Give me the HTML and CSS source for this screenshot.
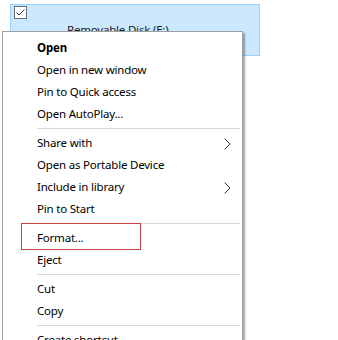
FILE: index.html
```html
<!DOCTYPE html>
<html>
<head>
<meta charset="utf-8">
<link rel="stylesheet" href="styles.css">
</head>
<body>
<div class="page">
  <div class="tile">
    <span class="check">
      <svg width="13" height="13" viewBox="0 0 13 13"><rect x="0.5" y="0.5" width="12" height="12" fill="#fff" stroke="#6d6d6d"/><path d="M2.5 6.5 L5 9 L10.5 3.5" fill="none" stroke="#333" stroke-width="1"/></svg>
    </span>
    <span class="label">Removable Disk (E:)</span>
  </div>

  <div class="menu">
    <div class="item bold">Open</div>
    <div class="item">Open in new window</div>
    <div class="item">Pin to Quick access</div>
    <div class="item">Open AutoPlay...</div>
    <div class="sep"></div>
    <div class="item">Share with<svg class="chev" width="7" height="12" viewBox="0 0 7 12"><path d="M0.5 0.5 L6 6 L0.5 11.5" fill="none" stroke="#333" stroke-width="1"/></svg></div>
    <div class="item">Open as Portable Device</div>
    <div class="item">Include in library<svg class="chev" width="7" height="12" viewBox="0 0 7 12"><path d="M0.5 0.5 L6 6 L0.5 11.5" fill="none" stroke="#333" stroke-width="1"/></svg></div>
    <div class="item">Pin to Start</div>
    <div class="sep"></div>
    <div class="item">Format...</div>
    <div class="item">Eject</div>
    <div class="sep"></div>
    <div class="item">Cut</div>
    <div class="item">Copy</div>
    <div class="sep"></div>
    <div class="item">Create shortcut</div>
  </div>

  <div class="highlight"></div>
</div>
</body>
</html>
```

FILE: styles.css
```css
html, body {
  margin: 0;
  padding: 0;
  background: #fff;
}
.page {
  position: relative;
  width: 338px;
  height: 340px;
  overflow: hidden;
  font-family: "Noto Sans", "Open Sans", sans-serif;
  font-size: 11.5px;
  letter-spacing: -0.2px;
  color: #000;
}
.tile {
  margin: 4px 0 0 10px;
  width: 248px;
  height: 50px;
  background: #cce8ff;
  border: 1px solid #99d1ff;
  display: flex;
  flex-direction: column;
}
.check {
  display: block;
  margin: 1px 0 0 3px;
  height: 13px;
}
.check svg { display: block; }
.label {
  margin: 3px 0 0 56px;
  line-height: 16px;
  color: #1a1a1a;
}
.menu {
  position: absolute;
  left: 2px;
  top: 31px;
  width: 239px;
  height: 330px;
  background: #fff;
  border: 1px solid #a0a0a0;
  box-shadow: 2px 2px 2px rgba(0, 0, 0, 0.35);
  padding: 5px 0 0 0;
  box-sizing: content-box;
}
.item {
  height: 22px;
  line-height: 22px;
  padding-left: 34px;
  display: flex;
  align-items: center;
  position: relative;
  white-space: nowrap;
}
.bold { font-weight: 700; }
.chev {
  position: absolute;
  right: 11px;
  top: 6px;
}
.sep {
  height: 7px;
  display: flex;
  align-items: center;
  padding-left: 34px;
  padding-right: 2px;
}
.sep::before {
  content: "";
  display: block;
  width: 100%;
  height: 1px;
  background: #d7d7d7;
}
.highlight {
  position: absolute;
  left: 21px;
  top: 223px;
  width: 118px;
  height: 25px;
  border: 1px solid #c9403f;
}
```
